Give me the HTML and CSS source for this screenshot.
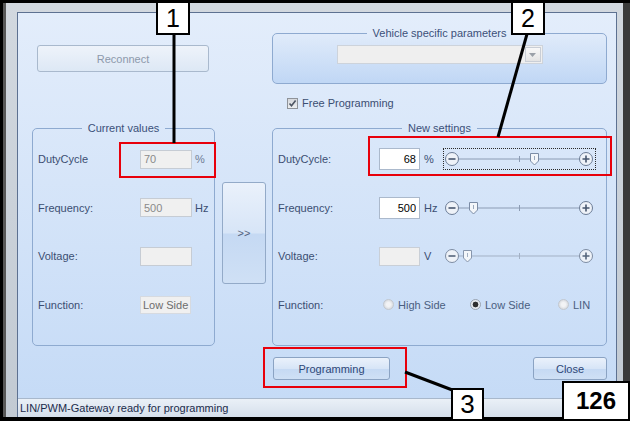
FILE: index.html
```html
<!DOCTYPE html>
<html>

<head>
    <meta charset="UTF-8" />
    <title>LIN/PWM-Gateway</title>
    <link rel="stylesheet" href="styles.css">
</head>

<body>
    <div class="screen">
        <div class="window">
            <div class="client">
                <div class="main">
                    <div class="col-left">
                        <button class="btn reconnect" disabled>Reconnect</button>

                        <fieldset class="group current">
                            <legend>Current values</legend>
                            <div class="row">
                                <span class="lbl">DutyCycle</span>
                                <input class="cur-field" value="70" readonly />
                                <span class="unit unit-dim">%</span>
                            </div>
                            <div class="row">
                                <span class="lbl">Frequency:</span>
                                <input class="cur-field" value="500" readonly />
                                <span class="unit">Hz</span>
                            </div>
                            <div class="row">
                                <span class="lbl">Voltage:</span>
                                <input class="cur-field" value="" readonly />
                            </div>
                            <div class="row">
                                <span class="lbl">Function:</span>
                                <span class="cur-func">Low Side</span>
                            </div>
                        </fieldset>
                    </div>

                    <div class="col-mid">
                        <button class="btn transfer">&gt;&gt;</button>
                    </div>

                    <div class="col-right">
                        <fieldset class="group vehicle">
                            <legend>Vehicle specific parameters</legend>
                            <div class="combo">
                                <span class="combo-drop">
                                    <svg width="7" height="4" viewBox="0 0 7 4"><path d="M0 0h7L3.5 4z" fill="#9aa0a8"/></svg>
                                </span>
                            </div>
                        </fieldset>

                        <label class="check">
                            <span class="check-box">
                                <svg width="9" height="9" viewBox="0 0 9 9"><path d="M1.5 4.5l2 2.2L7.6 1.6" fill="none" stroke="#4d5563" stroke-width="1.6"/></svg>
                            </span>
                            Free Programming
                        </label>

                        <fieldset class="group settings">
                            <legend>New settings</legend>
                            <div class="row">
                                <span class="lbl lbl-set">DutyCycle:</span>
                                <input class="set-field" value="68" />
                                <span class="set-unit">%</span>
                                <svg class="slider focused" width="153" height="22" viewBox="0 0 153 22">
                                    <line x1="15" y1="11" x2="137" y2="11" stroke="#8c9cb4"/>
                                    <line x1="76.5" y1="8" x2="76.5" y2="14" stroke="#8c9cb4"/>
                                    <circle cx="9" cy="11" r="6.5" fill="#eef2f8" stroke="#6b7c96"/>
                                    <path d="M5.5 11h7" stroke="#46566e" stroke-width="1.6"/>
                                    <circle cx="143" cy="11" r="6.5" fill="#eef2f8" stroke="#6b7c96"/>
                                    <path d="M139.5 11h7M143 7.5v7" stroke="#46566e" stroke-width="1.6"/>
                                    <path d="M87.5 5.5h8v7.5l-4 4l-4-4z" fill="#f3f6fa" stroke="#7b8ca6"/>
                                    <path d="M91.5 8v4" stroke="#9aa8bc"/>
                                </svg>
                            </div>
                            <div class="row">
                                <span class="lbl lbl-set">Frequency:</span>
                                <input class="set-field" value="500" />
                                <span class="set-unit">Hz</span>
                                <svg class="slider" width="153" height="22" viewBox="0 0 153 22">
                                    <line x1="15" y1="11" x2="137" y2="11" stroke="#8c9cb4"/>
                                    <line x1="76.5" y1="8" x2="76.5" y2="14" stroke="#8c9cb4"/>
                                    <circle cx="9" cy="11" r="6.5" fill="#eef2f8" stroke="#6b7c96"/>
                                    <path d="M5.5 11h7" stroke="#46566e" stroke-width="1.6"/>
                                    <circle cx="143" cy="11" r="6.5" fill="#eef2f8" stroke="#6b7c96"/>
                                    <path d="M139.5 11h7M143 7.5v7" stroke="#46566e" stroke-width="1.6"/>
                                    <path d="M26.5 5.5h8v7.5l-4 4l-4-4z" fill="#f3f6fa" stroke="#7b8ca6"/>
                                    <path d="M30.5 8v4" stroke="#9aa8bc"/>
                                </svg>
                            </div>
                            <div class="row">
                                <span class="lbl lbl-set">Voltage:</span>
                                <input class="set-field set-off" value="" disabled />
                                <span class="set-unit">V</span>
                                <svg class="slider" width="153" height="22" viewBox="0 0 153 22">
                                    <line x1="15" y1="11" x2="137" y2="11" stroke="#a3b1c5"/>
                                    <line x1="76.5" y1="8" x2="76.5" y2="14" stroke="#a3b1c5"/>
                                    <circle cx="9" cy="11" r="6.5" fill="#eef2f8" stroke="#7d8ca3"/>
                                    <path d="M5.5 11h7" stroke="#56657b" stroke-width="1.6"/>
                                    <circle cx="143" cy="11" r="6.5" fill="#eef2f8" stroke="#7d8ca3"/>
                                    <path d="M139.5 11h7M143 7.5v7" stroke="#56657b" stroke-width="1.6"/>
                                    <path d="M20.5 5.5h8v7.5l-4 4l-4-4z" fill="#f3f6fa" stroke="#8796ad"/>
                                    <path d="M24.5 8v4" stroke="#a4b1c4"/>
                                </svg>
                            </div>
                            <div class="row">
                                <span class="lbl lbl-set">Function:</span>
                                <div class="radios">
                                    <span class="radio"><span class="dot"></span>High Side</span>
                                    <span class="radio"><span class="dot dot-on"></span>Low Side</span>
                                    <span class="radio"><span class="dot"></span>LIN</span>
                                </div>
                            </div>
                        </fieldset>

                        <div class="actions">
                            <button class="btn prog">Programming</button>
                            <button class="btn close">Close</button>
                        </div>
                    </div>
                </div>
                <div class="status">LIN/PWM-Gateway ready for programming</div>
            </div>
        </div>

        <!-- callouts -->
        <svg class="callouts" width="630" height="421" viewBox="0 0 630 421">
            <rect x="120" y="143" width="95" height="34" fill="none" stroke="#e8000b" stroke-width="2"/>
            <rect x="369" y="137" width="242" height="38" fill="none" stroke="#e8000b" stroke-width="2"/>
            <rect x="264" y="348" width="142" height="39" fill="none" stroke="#e8000b" stroke-width="2"/>
            <line x1="174" y1="34" x2="174" y2="143" stroke="#000" stroke-width="3"/>
            <line x1="527" y1="34" x2="498" y2="137" stroke="#000" stroke-width="3"/>
            <line x1="405" y1="372" x2="455" y2="391" stroke="#000" stroke-width="3"/>
        </svg>
        <div class="tag tag-1">1</div>
        <div class="tag tag-2">2</div>
        <div class="tag tag-3">3</div>
        <div class="tag tag-page">126</div>
    </div>
</body>

</html>
```

FILE: styles.css
```css
* {
    box-sizing: border-box;
}

body {
    margin: 0;
    font-family: "Liberation Sans", Arial, sans-serif;
    font-size: 11px;
    color: #3b4e72;
}

.screen {
    position: relative;
    width: 630px;
    height: 421px;
    background: #000;
    padding: 3px 0 4px 3px;
}

.window {
    height: 100%;
    background: linear-gradient(#d2d8df, #c2cad3);
    border-left: 3px solid #585858;
    border-right: 7px solid #3a3a3a;
    padding: 9px 6px 0 11px;
}

.client {
    height: 100%;
    display: flex;
    flex-direction: column;
    border: 1px solid #5d7191;
    border-bottom: none;
    background: linear-gradient(#e3edfb, #c4daf6);
}

.main {
    flex: 1;
    display: flex;
    padding: 0 9px 0 14px;
}

/* buttons */
.btn {
    font: inherit;
    color: #2e4777;
    border: 1px solid #8ba3c3;
    border-radius: 3px;
    background: linear-gradient(#eaf1fb, #d7e5f7 50%, #c5d9f3 51%, #cfe0f5);
    padding: 0;
}

.reconnect {
    margin: 32px 0 0 5px;
    width: 172px;
    height: 27px;
    color: #8d99ab;
    border-color: #a9b9cd;
    background: linear-gradient(#eef3fa, #dde8f5);
}

.transfer {
    width: 44px;
    height: 102px;
    color: #52627d;
    border-color: #93aac8;
}

.prog {
    width: 117px;
    height: 23px;
}

.close {
    width: 74px;
    height: 23px;
}

/* columns */
.col-left {
    width: 183px;
    display: flex;
    flex-direction: column;
}

.col-mid {
    margin: 169px 6px 0 7px;
}

.col-right {
    flex: 1;
    display: flex;
    flex-direction: column;
}

/* group boxes */
.group {
    margin: 0;
    padding: 0 5px;
    min-width: 0;
    border: 1px solid #8eaad0;
    border-radius: 5px;
}

.group legend {
    margin: 0 auto;
    padding: 0 6px;
    line-height: 14px;
    color: #3b5079;
}

.current {
    margin-top: 49px;
    height: 225px;
}

.vehicle {
    margin-top: 13px;
    height: 58px;
    background: linear-gradient(#e0ebfa, #c0d7f5);
}

.settings {
    margin-top: 12px;
    height: 225px;
}

.row {
    display: flex;
    align-items: center;
    height: 48.5px;
}

.lbl {
    width: 102px;
    flex-shrink: 0;
}

.lbl-set {
    width: 101px;
}

.cur-field {
    width: 52px;
    height: 19px;
    font: inherit;
    color: #8a8a8a;
    background: #f0f0f0;
    border: 1px solid #c6ccd4;
    padding: 0 3px;
}

.cur-func {
    flex-shrink: 0;
    width: 51px;
    height: 18px;
    line-height: 16px;
    white-space: nowrap;
    overflow: hidden;
    color: #6d6d6d;
    background: #f0f0f0;
    border: 1px solid #d6dae0;
    padding: 0 2px;
}

.unit {
    margin-left: 3px;
}

.unit-dim {
    color: #6f7c94;
}

.set-field {
    width: 41px;
    height: 22px;
    font: inherit;
    color: #000;
    text-align: right;
    background: #fff;
    border: 1px solid #abb9cc;
    padding: 0 3px;
}

.set-off {
    height: 19px;
    background: #f0f0f0;
    border-color: #c9cfd7;
}

.set-unit {
    width: 19px;
    margin-left: 4px;
}

.slider {
    display: block;
}

.focused {
    outline: 1px dotted #2a2a2a;
    outline-offset: -1px;
}

.combo {
    width: 206px;
    height: 19px;
    margin: 5px auto 0;
    padding: 1px;
    display: flex;
    justify-content: flex-end;
    background: #efefef;
    border: 1px solid #cdd3db;
}

.combo-drop {
    width: 16px;
    display: flex;
    align-items: center;
    justify-content: center;
    border: 1px solid #c9ced6;
    background: linear-gradient(#f8f8f8, #e4e4e4);
}

.check {
    margin: 13px 0 0 15px;
    height: 12px;
    display: flex;
    align-items: center;
    gap: 4px;
}

.check-box {
    width: 11px;
    height: 11px;
    display: flex;
    align-items: center;
    justify-content: center;
    border: 1px solid #8f9399;
    background: linear-gradient(#d6d8dc, #eceef0);
}

.radios {
    display: grid;
    grid-template-columns: 87px 88px auto;
    margin-left: 4px;
}

.radio {
    display: flex;
    align-items: center;
    gap: 4px;
    color: #4a5e80;
}

.dot {
    width: 11px;
    height: 11px;
    border-radius: 50%;
    border: 1px solid #c3c8cf;
    background: radial-gradient(circle, #f2f3f5 0 2px, #d6d9de 5px);
}

.dot-on {
    border-color: #9aa3b0;
    background: radial-gradient(circle, #2e2e2e 0 2.6px, #e6e9ed 3.2px);
}

.actions {
    margin-top: 11px;
    padding-left: 1px;
    display: flex;
    justify-content: space-between;
}

.status {
    height: 19px;
    line-height: 18px;
    padding-left: 2px;
    font-size: 11px;
    color: #1b2b4b;
    border-top: 1px solid #a8b8cc;
    background: linear-gradient(#eaf0f7, #d5dfeb);
}

/* callouts */
.callouts {
    position: absolute;
    top: 0;
    left: 0;
    pointer-events: none;
}

.tag {
    position: absolute;
    display: flex;
    align-items: center;
    justify-content: center;
    background: #fff;
    border: 2px solid #000;
    color: #000;
    font-size: 25px;
}

.tag-1 {
    left: 156px;
    top: 1px;
    width: 34px;
    height: 34px;
}

.tag-2 {
    left: 511px;
    top: 1px;
    width: 34px;
    height: 34px;
}

.tag-3 {
    left: 451px;
    top: 388px;
    width: 33px;
    height: 33px;
    font-size: 26px;
}

.tag-page {
    left: 562px;
    top: 381px;
    width: 68px;
    height: 40px;
    font-size: 24px;
    font-weight: bold;
}
```
